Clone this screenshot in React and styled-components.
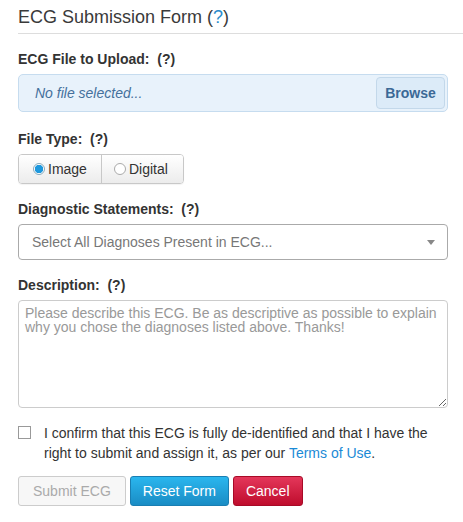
import React, { useState } from 'react';
import styled, { createGlobalStyle } from 'styled-components';

const GlobalStyle = createGlobalStyle`
  html, body {
    margin: 0;
    padding: 0;
    background: #fff;
  }
  body {
    font-family: "Liberation Sans", Arial, sans-serif;
    color: #333;
  }
`;

const Page = styled.div`
  padding: 0 0 0 18px;
`;

const Header = styled.h2`
  margin: 0;
  padding: 6px 0 5px;
  font-size: 18px;
  line-height: 22px;
  font-weight: normal;
  color: #3a3a3a;
  border-bottom: 1px solid #ddd;
`;

const HelpLink = styled.a`
  color: #2a8bcc;
  text-decoration: none;
`;

const Form = styled.form`
  width: 430px;
  display: flex;
  flex-direction: column;
`;

const Label = styled.label`
  display: block;
  margin: ${(props) => props.$top || 16}px 0 6px;
  font-size: 14px;
  line-height: 18px;
  font-weight: bold;
  color: #333;
`;

const FileBox = styled.div`
  display: flex;
  align-items: center;
  justify-content: space-between;
  height: 38px;
  box-sizing: border-box;
  padding: 0 2px 0 16px;
  background: #e8f2fb;
  border: 1px solid #c6dcef;
  border-radius: 5px;
`;

const FileText = styled.span`
  font-size: 14px;
  font-style: italic;
  color: #44709c;
`;

const BrowseButton = styled.button`
  height: 32px;
  width: 69px;
  padding: 0;
  font-family: inherit;
  font-size: 14px;
  font-weight: bold;
  color: #3b6996;
  background: #dcebf8;
  border: 1px solid #c3d8ea;
  border-radius: 4px;
`;

const RadioGroup = styled.div`
  display: flex;
  width: fit-content;
  border: 1px solid #c8c8c8;
  border-radius: 4px;
  overflow: hidden;
  box-shadow: 0 1px 1px rgba(0, 0, 0, 0.05);
`;

const RadioOption = styled.label`
  display: flex;
  align-items: center;
  gap: 3px;
  height: 28px;
  width: ${(props) => props.$width}px;
  box-sizing: border-box;
  padding-left: ${(props) => props.$pad}px;
  font-size: 14px;
  color: #333;
  background: linear-gradient(#fff, #ececec);
  & + & {
    border-left: 1px solid #c8c8c8;
  }
`;

const RadioDot = styled.span`
  width: 12px;
  height: 12px;
  box-sizing: border-box;
  border-radius: 50%;
  border: 1px solid ${(props) => (props.$checked ? '#8ab' : '#aaa')};
  background: ${(props) => (props.$checked ? 'radial-gradient(circle, #1e98dd 0 4px, #fff 4.5px)' : '#fff')};
`;

const Select = styled.div`
  display: flex;
  align-items: center;
  justify-content: space-between;
  height: 36px;
  box-sizing: border-box;
  padding: 0 12px 0 13px;
  border: 1px solid #aaa;
  border-radius: 4px;
  font-size: 14px;
  color: #777;
`;

const Caret = styled.span`
  width: 0;
  height: 0;
  border-left: 4px solid transparent;
  border-right: 4px solid transparent;
  border-top: 5px solid #888;
`;

const TextArea = styled.textarea`
  display: block;
  height: 108px;
  box-sizing: border-box;
  padding: 5px 6px;
  border: 1px solid #ccc;
  border-radius: 4px;
  font-family: inherit;
  font-size: 14px;
  line-height: 14px;
  color: #333;
  resize: vertical;
  &::placeholder {
    color: #999;
  }
`;

const ConfirmRow = styled.div`
  display: flex;
  align-items: flex-start;
  gap: 13px;
  margin-top: 15px;
`;

const CheckBox = styled.span`
  flex: none;
  width: 13px;
  height: 13px;
  margin-top: 3px;
  box-sizing: border-box;
  border: 1px solid #999;
  background: #fff;
`;

const ConfirmText = styled.p`
  margin: 0;
  font-size: 14px;
  line-height: 20px;
  color: #333;
`;

const TermsLink = styled.a`
  color: #1a8ad6;
  text-decoration: none;
`;

const ButtonRow = styled.div`
  display: flex;
  gap: 4px;
  margin-top: 13px;
`;

const variants = {
  disabled: { bg: '#f7f7f7', border: '#ccc', color: '#aaa' },
  info: { bg: 'linear-gradient(#2ab6ee, #1a8cc4)', border: '#1a7eb2', color: '#fff' },
  danger: { bg: 'linear-gradient(#e4375a, #bf0d2d)', border: '#a80a27', color: '#fff' },
};

const Button = styled.button`
  height: 30px;
  padding: 0 ${(props) => props.$pad}px;
  font-family: inherit;
  font-size: 14px;
  color: ${(props) => variants[props.$variant].color};
  background: ${(props) => variants[props.$variant].bg};
  border: 1px solid ${(props) => variants[props.$variant].border};
  border-radius: 3px;
`;

function App() {
  const [fileType, setFileType] = useState('image');
  return (
    <Page>
      <GlobalStyle />
      <Header>
        ECG Submission Form (<HelpLink href="#">?</HelpLink>)
      </Header>
      <Form onSubmit={(e) => e.preventDefault()}>
        <Label>ECG File to Upload:&nbsp; (?)</Label>
        <FileBox>
          <FileText>No file selected...</FileText>
          <BrowseButton type="button">Browse</BrowseButton>
        </FileBox>

        <Label $top={18}>File Type:&nbsp; (?)</Label>
        <RadioGroup>
          <RadioOption $width={82} $pad={14} onClick={() => setFileType('image')}>
            <RadioDot $checked={fileType === 'image'} />
            Image
          </RadioOption>
          <RadioOption $width={82} $pad={12} onClick={() => setFileType('digital')}>
            <RadioDot $checked={fileType === 'digital'} />
            Digital
          </RadioOption>
        </RadioGroup>

        <Label>Diagnostic Statements:&nbsp; (?)</Label>
        <Select>
          <span>Select All Diagnoses Present in ECG...</span>
          <Caret />
        </Select>

        <Label>Description:&nbsp; (?)</Label>
        <TextArea placeholder="Please describe this ECG. Be as descriptive as possible to explain why you chose the diagnoses listed above. Thanks!" />

        <ConfirmRow>
          <CheckBox />
          <ConfirmText>
            I confirm that this ECG is fully de-identified and that I have the right to submit and assign it, as per our <TermsLink href="#">Terms of Use</TermsLink>.
          </ConfirmText>
        </ConfirmRow>

        <ButtonRow>
          <Button type="button" $variant="disabled" $pad={14} disabled>Submit ECG</Button>
          <Button type="button" $variant="info" $pad={12}>Reset Form</Button>
          <Button type="button" $variant="danger" $pad={12}>Cancel</Button>
        </ButtonRow>
      </Form>
    </Page>
  );
}

export default App;
